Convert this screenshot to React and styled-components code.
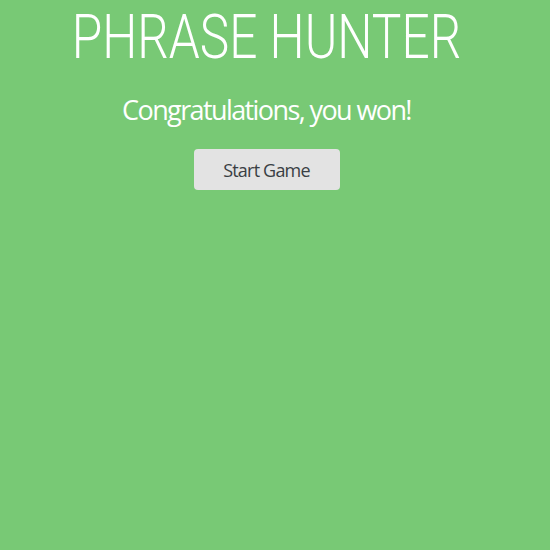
import React from "react";
import styled, { createGlobalStyle } from "styled-components";

const Global = createGlobalStyle`
  html, body { margin: 0; padding: 0; background: #78c975; }
  body { font-family: "Open Sans", "Liberation Sans", sans-serif; }
`;

const Overlay = styled.div`
  width: 533px;
  height: 550px;
  background: #78c975;
  display: flex;
  flex-direction: column;
  align-items: center;
`;

const Title = styled.h2`
  margin: 0;
  font-family: "Roboto", "Open Sans", sans-serif;
  font-weight: 300;
  font-size: 62px;
  line-height: 74px;
  color: #fff;
  white-space: nowrap;
  transform: scaleX(0.8);
  transform-origin: center;
`;

const Message = styled.h1`
  margin: 18px 0 0;
  font-family: "Open Sans", sans-serif;
  font-weight: 400;
  font-size: 27px;
  line-height: 36px;
  letter-spacing: -1.6px;
  color: #fff;
`;

const Button = styled.button`
  margin-top: 21px;
  width: 146px;
  height: 41px;
  border: none;
  border-radius: 4px;
  background: #e3e3e3;
  color: #3a3f44;
  font-family: "Open Sans", sans-serif;
  font-size: 18px;
  letter-spacing: -0.8px;
  cursor: pointer;
`;

export default function App() {
  return (
    <>
      <Global />
      <Overlay>
        <Title>PHRASE HUNTER</Title>
        <Message>Congratulations, you won!</Message>
        <Button>Start Game</Button>
      </Overlay>
    </>
  );
}
